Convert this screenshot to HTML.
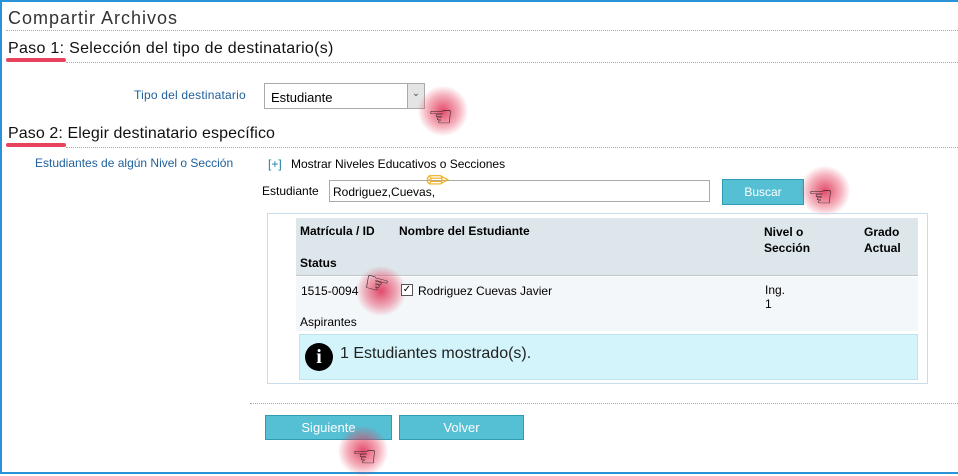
<!DOCTYPE html>
<html><head><meta charset="utf-8"><style>
*{margin:0;padding:0;box-sizing:border-box}
body{width:958px;height:474px;overflow:hidden;background:#fff;font-family:"Liberation Sans",sans-serif;position:relative}
.frame{position:absolute;left:0;top:0;width:958px;height:474px;border:2px solid #2a93d5;border-right:none}
.a{position:absolute;white-space:nowrap}
.dot{position:absolute;height:0;border-top:1px dotted #aaa}
.ul{position:absolute;height:4px;background:#e8435e;border-radius:2px}
.btn{position:absolute;background:#55bfd4;border:1px solid #2f9cb5;color:#fff;font-size:13px;text-align:center}
.glow{position:absolute;width:50px;height:50px;border-radius:50%;background:radial-gradient(circle,rgba(220,30,70,.8) 0%,rgba(230,60,90,.4) 45%,rgba(255,255,255,0) 72%)}
.hand{position:absolute;font-size:28px;color:#222;line-height:1}
</style></head><body>
<div class="frame"></div>
<div class="a" style="left:8px;top:8px;font-size:18px;color:#333;letter-spacing:1px">Compartir Archivos</div>
<div class="dot" style="left:6px;right:0;top:30px"></div>
<div class="a" style="left:8px;top:40px;font-size:16px;color:#111;letter-spacing:.3px">Paso 1: Selección del tipo de destinatario(s)</div>
<div class="ul" style="left:6px;top:58px;width:60px"></div>
<div class="dot" style="left:66px;right:0;top:62px"></div>
<div class="a" style="left:134px;top:88px;font-size:12px;color:#1f5f9c;letter-spacing:.2px">Tipo del destinatario</div>
<div class="a" style="left:264px;top:83px;width:161px;height:26px;border:1px solid #aaa;font-size:13px;color:#000;padding:6px 0 0 6px">Estudiante<div style="position:absolute;right:0;top:0;width:17px;height:24px;background:#e4e4e4;border-left:1px solid #aaa;font-size:10px;text-align:center;line-height:20px;color:#555">⌄</div></div>
<div class="glow" style="left:418px;top:86px"></div>
<div class="hand" style="left:428px;top:103px">☜</div>
<div class="a" style="left:8px;top:125px;font-size:16px;color:#111;letter-spacing:.1px">Paso 2: Elegir destinatario específico</div>
<div class="ul" style="left:6px;top:143px;width:60px"></div>
<div class="dot" style="left:66px;right:0;top:147px"></div>
<div class="a" style="left:35px;top:156px;font-size:12px;color:#1f5f9c">Estudiantes de algún Nivel o Sección</div>
<div class="a" style="left:268px;top:157px;font-size:12px;color:#1a7fa0">[+]</div>
<div class="a" style="left:291px;top:157px;font-size:12px;color:#000">Mostrar Niveles Educativos o Secciones</div>
<div class="a" style="left:262px;top:184px;font-size:12px;color:#000">Estudiante</div>
<div class="a" style="left:329px;top:180px;width:381px;height:22px;border:1px solid #aaa;font-size:12px;padding:4px 0 0 3px">Rodriguez,Cuevas,</div>
<div class="a" style="left:426px;top:164px;font-size:28px;color:#f0b020">✏</div>
<div class="btn" style="left:722px;top:179px;width:82px;height:26px;line-height:24px;font-size:12px">Buscar</div>
<div class="glow" style="left:800px;top:166px"></div>
<div class="hand" style="left:808px;top:183px">☜</div>
<div class="a" style="left:267px;top:213px;width:661px;height:171px;border:1px solid #c8dced"></div>
<div class="a" style="left:296px;top:218px;width:622px;height:58px;background:#dde7eb;border-bottom:1px solid #c0c8cc"></div>
<div class="a" style="left:300px;top:224px;font-size:12px;font-weight:bold">Matrícula / ID</div>
<div class="a" style="left:399px;top:224px;font-size:12px;font-weight:bold">Nombre del Estudiante</div>
<div class="a" style="left:764px;top:224px;font-size:12px;font-weight:bold;line-height:16px">Nivel o<br>Sección</div>
<div class="a" style="left:864px;top:224px;font-size:12px;font-weight:bold;line-height:16px">Grado<br>Actual</div>
<div class="a" style="left:300px;top:256px;font-size:12px;font-weight:bold">Status</div>
<div class="a" style="left:296px;top:277px;width:622px;height:54px;background:#f3f7fa"></div>
<div class="a" style="left:301px;top:284px;font-size:12px">1515-0094</div>
<div class="glow" style="left:356px;top:266px"></div>
<div class="hand" style="left:364px;top:270px;transform:scaleX(-1) rotate(-15deg)">☜</div>
<div class="a" style="left:401px;top:284px;width:12px;height:12px;border:1px solid #555;font-size:10px;line-height:10px;text-align:center;background:#fff">✓</div>
<div class="a" style="left:418px;top:284px;font-size:12px">Rodriguez Cuevas Javier</div>
<div class="a" style="left:765px;top:283px;font-size:12px;line-height:14px">Ing.<br>1</div>
<div class="a" style="left:300px;top:315px;font-size:12px">Aspirantes</div>
<div class="a" style="left:299px;top:334px;width:619px;height:46px;background:#d3f4fa;border:1px solid #bfe3ea"></div>
<div class="a" style="left:305px;top:343px;width:28px;height:28px;border-radius:50%;background:#000;color:#fff;font-family:'Liberation Serif',serif;font-weight:bold;font-size:20px;text-align:center;line-height:28px">i</div>
<div class="a" style="left:340px;top:345px;font-size:16px;color:#222">1 Estudiantes mostrado(s).</div>
<div class="dot" style="left:250px;right:0;top:403px"></div>
<div class="btn" style="left:265px;top:415px;width:127px;height:25px;line-height:23px">Siguiente</div>
<div class="btn" style="left:399px;top:415px;width:125px;height:25px;line-height:23px">Volver</div>
<div class="glow" style="left:338px;top:426px"></div>
<div class="hand" style="left:352px;top:443px">☜</div>
</body></html>
